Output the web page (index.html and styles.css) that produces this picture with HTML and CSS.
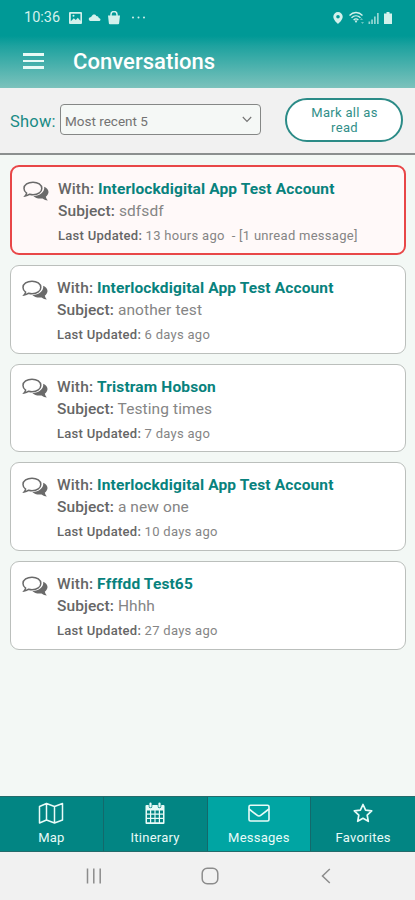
FILE: index.html
```html
<!DOCTYPE html>
<html lang="en">
<head>
<meta charset="utf-8">
<meta name="viewport" content="width=device-width, initial-scale=1">
<title>Conversations</title>
<link rel="stylesheet" href="styles.css">
</head>
<body>
<svg class="defs" width="0" height="0">
  <symbol id="chat" viewBox="0 0 26 21">
    <path d="M10 1.200c5 0 8.800 2.700 8.800 6.200s-3.800 6.300-8.800 6.300c-1.200 0-2.300-.2-3.300-.5-1.300.9-2.900 1.500-4.600 1.700.8-.9 1.300-1.800 1.500-2.800C2 11 1 9.300 1 7.400c0-3.500 4-6.200 9-6.200z" fill="none" stroke="currentColor" stroke-width="1.500"/>
    <path d="M21.200 5.800c2.700 1 4.300 3 4.300 5.300 0 1.800-1.100 3.400-2.700 4.700.3 1.400 1 2.600 2 3.600-1.900 0-3.700-.8-5.200-2-3.700.7-7.300-.4-9.300-2.400 6.200.2 11.600-3.700 10.900-9.200z" fill="currentColor"/>
  </symbol>
</svg>
<div class="app">
  <header class="header">
    <div class="status">
      <span class="time">10:36</span>
      <svg class="status-left" width="80" height="14" viewBox="0 0 80 14" fill="currentColor">
        <path fill-rule="evenodd" d="M1 1h11a1 1 0 0 1 1 1v10a1 1 0 0 1-1 1H1a1 1 0 0 1-1-1V2a1 1 0 0 1 1-1zM1.800 2.700v7.500l3-3 2 1.700 2-2.200 2.600 3V2.700z"/><circle cx="4.500" cy="4.800" r="1"/>
        <path d="M21 10a2 2 0 0 1-.4-3.500c1.200-.3 1.600-.5 2.400-1.700 1-1.800 3.500-1.600 4.300.2 1.500 0 2.300.8 2.500 2 2.200.4 2.200 3 .2 3z"/>
        <path d="M39 4.500h12l-.9 8a1 1 0 0 1-1 .8h-8.200a1 1 0 0 1-1-.8z"/><path d="M42 6V3.500a3 3 0 0 1 6 0V6" fill="none" stroke="currentColor" stroke-width="1.500"/>
        <circle cx="64" cy="6.500" r="1"/><circle cx="69.500" cy="6.500" r="1"/><circle cx="75" cy="6.500" r="1"/>
      </svg>
      <svg class="status-right" width="60" height="14" viewBox="0 0 60 14" fill="currentColor">
        <path fill-rule="evenodd" d="M5 1a4.700 4.700 0 0 1 4.700 4.700C9.700 9 5 13 5 13S.3 9 .3 5.700A4.700 4.700 0 0 1 5 1zm0 3a1.800 1.800 0 1 0 0 3.600A1.800 1.800 0 0 0 5 4z"/>
        <g fill="none" stroke="currentColor" stroke-width="1.300"><path d="M16.500 4.500c3.800-4 9.200-4 13 0M18.500 6.800c2.700-2.700 6.300-2.700 9 0M20.600 9c1.700-1.500 3.100-1.500 4.800 0"/></g><path d="M21.500 9.500h3L23 12z"/><path d="M27 9l1.500-2L30 9zM28 11h3l-1.500 2z" opacity=".5"/>
        <path d="M35.500 10.500h1.700V13h-1.700zM38.200 8.500h1.700V13h-1.700zM41 5.500h1.700V13H41zM44 2h1.700v11H44z" opacity=".7"/>
        <path d="M53.500 1h3v1.500H59V13h-8V2.500h2.500z"/>
      </svg>
    </div>
    <div class="titlebar">
      <div class="menu"><i></i><i></i><i></i></div>
      <h1>Conversations</h1>
    </div>
  </header>
  <div class="filter">
    <span class="show">Show:</span>
    <div class="select"><span>Most recent 5</span>
      <svg width="10" height="7" viewBox="0 0 10 7"><path d="M.8 1 5 5.500 9.200 1" fill="none" stroke="currentColor" stroke-width="1.100"/></svg>
    </div>
    <button class="mark">Mark all as<br>read</button>
  </div>
  <main class="list">
    <article class="card unread">
      <svg class="chat" width="26" height="21"><use href="#chat"/></svg>
      <div class="body">
        <p class="with"><b>With:</b> <strong>Interlockdigital App Test Account</strong></p>
        <p class="subject"><b>Subject:</b> sdfsdf</p>
        <p class="updated"><b>Last Updated:</b> 13 hours ago &nbsp;- [1 unread message]</p>
      </div>
    </article>
    <article class="card">
      <svg class="chat" width="26" height="21"><use href="#chat"/></svg>
      <div class="body">
        <p class="with"><b>With:</b> <strong>Interlockdigital App Test Account</strong></p>
        <p class="subject"><b>Subject:</b> another test</p>
        <p class="updated"><b>Last Updated:</b> 6 days ago</p>
      </div>
    </article>
    <article class="card">
      <svg class="chat" width="26" height="21"><use href="#chat"/></svg>
      <div class="body">
        <p class="with"><b>With:</b> <strong>Tristram Hobson</strong></p>
        <p class="subject"><b>Subject:</b> Testing times</p>
        <p class="updated"><b>Last Updated:</b> 7 days ago</p>
      </div>
    </article>
    <article class="card">
      <svg class="chat" width="26" height="21"><use href="#chat"/></svg>
      <div class="body">
        <p class="with"><b>With:</b> <strong>Interlockdigital App Test Account</strong></p>
        <p class="subject"><b>Subject:</b> a new one</p>
        <p class="updated"><b>Last Updated:</b> 10 days ago</p>
      </div>
    </article>
    <article class="card">
      <svg class="chat" width="26" height="21"><use href="#chat"/></svg>
      <div class="body">
        <p class="with"><b>With:</b> <strong>Ffffdd Test65</strong></p>
        <p class="subject"><b>Subject:</b> Hhhh</p>
        <p class="updated"><b>Last Updated:</b> 27 days ago</p>
      </div>
    </article>
  </main>
  <nav class="tabs">
    <a class="tab">
      <svg width="26" height="22" viewBox="0 0 26 22" fill="none" stroke="currentColor" stroke-width="1.500"><path d="M1.500 4.500 8.500 1.500l8 3 8-3v16.500l-8 3-8-3-7 3zM8.500 1.500V18M16.500 4.500V21" stroke-linejoin="round"/></svg>
      <span>Map</span>
    </a>
    <a class="tab">
      <svg width="20" height="22" viewBox="0 0 20 22"><path fill="currentColor" fill-rule="evenodd" d="M1.500 3H18.500a1 1 0 0 1 1 1V21a1 1 0 0 1-1 1H1.500a1 1 0 0 1-1-1V4a1 1 0 0 1 1-1zM2 8.500v3h3v-3zm4.200 0v3h3.200v-3zm4.400 0v3h3.200v-3zm4.400 0v3h3v-3zM2 12.700v3h3v-3zm4.200 0v3h3.200v-3zm4.400 0v3h3.200v-3zm4.400 0v3h3v-3zM2 17v3.300h3V17zm4.200 0v3.300h3.200V17zm4.400 0v3.300h3.200V17zm4.400 0v3.300h3V17z"/><path d="M5.500 2v2.500M14.500 2v2.500" stroke="#028583" stroke-width="3.600" stroke-linecap="round"/><path d="M5.500 1.500v3M14.500 1.500v3" stroke="currentColor" stroke-width="2.200" stroke-linecap="round"/></svg>
      <span>Itinerary</span>
    </a>
    <a class="tab active">
      <svg width="22" height="18" viewBox="0 0 22 18" fill="none" stroke="currentColor" stroke-width="1.600"><rect x="1" y="1.200" width="20" height="15.800" rx="1.500"/><path d="M1 5l8 6.200q2 1.500 4 0L21 5"/></svg>
      <span>Messages</span>
    </a>
    <a class="tab">
      <svg width="20" height="20" viewBox="0 0 20 20" fill="none" stroke="currentColor" stroke-width="1.700" stroke-linejoin="round"><path d="M10 1.500l2.600 5.600 6.100.8-4.500 4.200 1.100 6.200-5.300-3-5.300 3 1.100-6.200L1.300 7.900l6.100-.8z"/></svg>
      <span>Favorites</span>
    </a>
  </nav>
  <footer class="system">
    <svg width="16" height="16" viewBox="0 0 16 16" stroke="currentColor" stroke-width="1.500"><path d="M1.500 .5v15M7.800 .5v15M14.200 .5v15"/></svg>
    <svg width="18" height="18" viewBox="0 0 18 18" fill="none" stroke="currentColor" stroke-width="1.500"><rect x="1.200" y="1.200" width="15.600" height="15.600" rx="5"/></svg>
    <svg width="10" height="16" viewBox="0 0 10 16" fill="none" stroke="currentColor" stroke-width="1.500"><path d="M8.800 1 1.500 8l7.300 7"/></svg>
  </footer>
</div>
</body>
</html>
```

FILE: styles.css
```css
* { box-sizing: border-box; }
body { margin: 0; font-family: Roboto, "Liberation Sans", sans-serif; background: #f3f8f5; }
.defs { display: block; height: 0; }
.app { display: flex; flex-direction: column; width: 415px; height: 900px; overflow: hidden; }
h1, p { margin: 0; }
svg { display: block; flex: none; }

.header { flex: none; height: 88px; background: linear-gradient(#009996 0, #009996 36px, #1ea29f 46px, #7cc2bc 88px); color: #fff; }
.status { display: flex; align-items: center; height: 34px; padding: 1px 22px 0 24px; color: #d3f1ec; }
.time { width: 37px; font-size: 14.500px; line-height: 34px; }
.status-left { margin-left: 8px; }
.status-right { margin-left: auto; }
.titlebar { display: flex; align-items: center; height: 56px; padding-left: 23px; }
.menu { display: flex; flex-direction: column; gap: 4px; width: 21px; margin-top: -2px; }
.menu i { height: 2.500px; background: #e9faf6; }
h1 { margin-left: 29px; font-size: 22px; line-height: 28px; font-weight: 500; letter-spacing: .05px; }

.filter { flex: none; display: flex; align-items: center; height: 67px; padding: 0 12px 2px 10px; background: #f1f1f1; border-bottom: 2px solid #8b8f8f; }
.show { width: 50px; padding-top: 4px; font-size: 16.500px; color: #198b85; letter-spacing: .2px; }
.select { display: flex; align-items: center; justify-content: space-between; width: 201px; height: 31px; padding: 0 8px 0 4px; border: 1.500px solid #858786; border-radius: 4px; background: #f5f8f6; color: #737373; font-size: 13.500px; letter-spacing: 0; }
.select span { padding-top: 2px; }
.mark { width: 118px; height: 44px; margin-left: auto; padding: 0 0 0 1px; border: 2px solid #2b8b87; border-radius: 22px; background: #fff; color: #318f89; font: 13px/15px Roboto, "Liberation Sans", sans-serif; letter-spacing: .3px; }

.list { flex: 1; display: flex; flex-direction: column; gap: 10px; padding: 10px 9.500px 0 10px; }
.card { flex: none; display: flex; height: 88.700px; padding: 11px 0 0 11px; border: 1.500px solid #bbbfbc; border-radius: 9px; background: #fff; color: #6a6a6a; }
.unread { height: 90px; border: 2px solid #e84748; background: #fff9f9; }
.chat { margin-top: 2.500px; }
.body { margin-left: 9px; white-space: nowrap; }
.body b { font-weight: 500; color: #666; }
.with { font-size: 15.500px; line-height: 22px; letter-spacing: .13px; }
.with strong { font-weight: 700; color: #08827d; }
.subject { font-size: 15.500px; line-height: 22px; letter-spacing: .09px; color: #858585; }
.updated { margin-top: 4px; font-size: 13px; line-height: 20px; letter-spacing: .28px; color: #858585; }

.tabs { flex: none; display: grid; grid-template-columns: repeat(4, 1fr); height: 56px; border-top: 1px solid #236b6b; border-bottom: 1px solid #236b6b; }
.tab { display: grid; grid-template-rows: 31px 19px; align-content: start; justify-items: center; align-items: center; border-right: 1px solid #13696b; background: #028583; color: #e9fbf8; font-size: 13px; letter-spacing: .25px; }
.tab:last-child { border-right: 0; }
.active { background: #00a5a3; }
.system { flex: none; display: flex; align-items: center; height: 48px; padding-left: 86px; background: #f1f1f1; color: #8c8c8c; }
.system svg:nth-child(2) { margin-left: 99px; }
.system svg:nth-child(3) { margin-left: 102px; }
```
